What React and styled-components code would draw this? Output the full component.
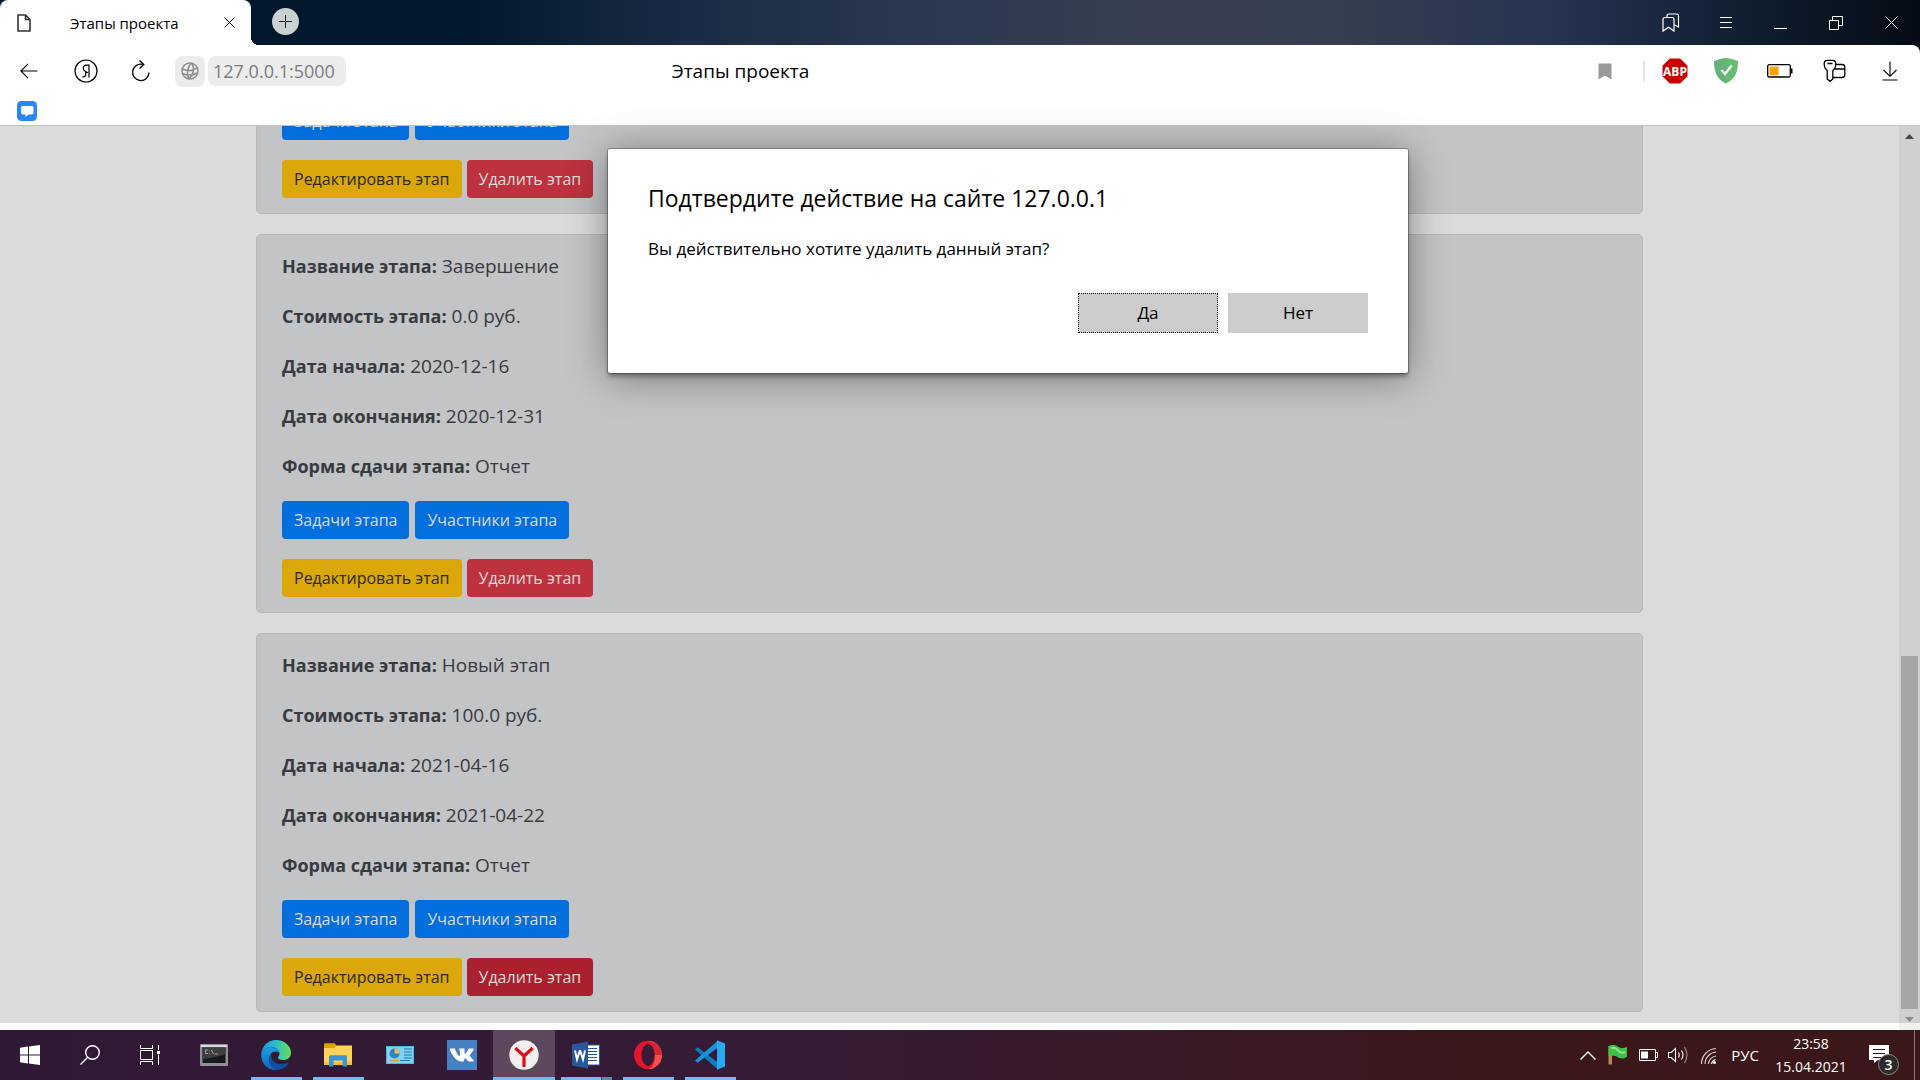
import React from "react";
import styled, { createGlobalStyle, css } from "styled-components";

const GlobalStyle = createGlobalStyle`
  *, *::before, *::after { box-sizing: border-box; }
  body { margin: 0; overflow: hidden; background: #fff; }
  button, input { font: inherit; }
  svg { display: block; flex: none; }
`;

const uiFont = `"Open Sans", "Noto Sans", sans-serif`;

const Screen = styled.div`
  height: 100vh;
  display: flex;
  flex-direction: column;
  font-family: ${uiFont};
  color: #000;
`;

/* ---------- browser chrome ---------- */

const TabStrip = styled.header`
  display: flex;
  height: 45px;
  flex: none;
  background: linear-gradient(90deg, #02172b 0%, #02182d 24%, #1a2c45 36%, #2b3850 48%, #383f51 60%, #353e50 70%, #2c3750 77%, #263352 81%, #132236 89%, #0b1624 95%, #050c15 100%);
`;

const Tab = styled.div`
  position: relative;
  display: flex;
  align-items: center;
  width: 251px;
  padding: 0 12px 0 16px;
  border-radius: 8px 8px 0 0;
  background: #fff;
  font-size: 15px;
  &::after {
    content: "";
    position: absolute;
    bottom: 0;
    left: 100%;
    width: 8px;
    height: 8px;
    background: radial-gradient(circle at 100% 0, transparent 8px, #fff 8px);
  }
`;

const TabTitle = styled.span`
  flex: 1;
  padding-left: 38px;
  white-space: nowrap;
`;

const PlainButton = styled.button`
  display: inline-flex;
  align-items: center;
  justify-content: center;
  width: ${(p) => p.$w || 36}px;
  height: ${(p) => p.$h || 36}px;
  padding: 0;
  border: 0;
  background: none;
  color: inherit;
  flex: none;
`;

const NewTabButton = styled(PlainButton)`
  width: 27px;
  height: 27px;
  margin: 8px 0 0 21px;
  border-radius: 50%;
  background: #cbd0d3;
  color: #1b2530;
`;

const WindowButtons = styled.div`
  display: flex;
  align-items: center;
  margin-left: auto;
  color: #fff;
`;

const ToolbarBack = styled.div`
  flex: none;
  background: #0a0f15;
`;

const Toolbar = styled.nav`
  display: grid;
  grid-template-columns: 1fr auto 1fr;
  align-items: center;
  height: 52px;
  padding-right: 3px;
  border-radius: 0 8px 0 0;
  background: #fff;
`;

const ToolbarSide = styled.div`
  display: flex;
  align-items: center;
  justify-content: ${(p) => (p.$end ? "flex-end" : "flex-start")};
`;

const SiteBadge = styled(PlainButton)`
  width: 30px;
  height: 31px;
  margin: 0 3px 0 6px;
  border-radius: 8px;
  background: #ececec;
  color: #8c8c8c;
`;

const Address = styled.input`
  width: 138px;
  height: 30px;
  padding: 0 5px;
  border: 0;
  border-radius: 8px;
  background: #ececec;
  color: #7c7c7c;
  font-size: 18px;
`;

const PageName = styled.h1`
  margin: 0 436px 0 0;
  font-size: 19px;
  font-weight: 400;
  white-space: nowrap;
`;

const Divider = styled.span`
  width: 2px;
  height: 20px;
  margin: 0 6px 0 30px;
  background: #e2e2e2;
`;

const BookmarkBar = styled.div`
  display: flex;
  flex: none;
  height: 28px;
  padding: 4px 9px;
`;

/* ---------- page ---------- */

const Viewport = styled.div`
  position: relative;
  display: flex;
  flex: 1;
  min-height: 0;
`;

const PageColumn = styled.div`
  display: flex;
  flex: 1;
  flex-direction: column;
  min-width: 0;
  padding-bottom: 7px;
`;

const Page = styled.main`
  display: flex;
  flex: 1;
  flex-direction: column;
  justify-content: flex-end;
  min-height: 0;
  overflow: hidden;
  border-top: 1px solid #c2c2c2;
  background: #dbdbdb;
`;

const Container = styled.div`
  display: flex;
  flex-direction: column;
  gap: 20px;
  width: 100%;
  max-width: 1425px;
  margin: 0 auto;
  padding: 0 19px 11px;
`;

const Card = styled.section`
  display: flex;
  flex-direction: column;
  gap: 20px;
  padding: 16px 25px 15px;
  border: 1px solid #b6b7ba;
  border-radius: 5px;
  background: #c3c4c6;
`;

const Field = styled.p`
  margin: 0;
  color: #373b3f;
  font-size: 19px;
  line-height: 30px;
`;

const FieldName = styled.b`
  font-size: 18px;
`;

const Actions = styled.div`
  display: flex;
  gap: ${(p) => p.$gap}px;
`;

const tones = {
  primary: css`background: #036edd; color: #dbdbdb;`,
  warning: css`background: #dba70b; color: #2a2a22;`,
  danger: css`background: #be313f; color: #dbdbdb;`,
  dangerActive: css`background: #a9212e; color: #dbdbdb;`,
};

const ActionButton = styled.button`
  height: 38px;
  padding: 0 12px;
  border: 0;
  border-radius: 4px;
  font-size: 16px;
  line-height: 38px;
  white-space: nowrap;
  ${(p) => tones[p.$tone]}
`;

const ScrollTrack = styled.div`
  display: flex;
  flex-direction: column;
  align-items: center;
  width: 21px;
  border-top: 1px solid #c2c2c2;
  background: linear-gradient(#d0d0d0 calc(100% - 7px), #f0f0f0 calc(100% - 7px));
`;

const ScrollArrow = styled(PlainButton)`
  width: 21px;
  height: 21px;
  color: ${(p) => (p.$muted ? "#8b8b8b" : "#454545")};
`;

const ScrollRun = styled.div`
  display: flex;
  flex: 1;
  flex-direction: column;
  justify-content: flex-end;
`;

const ScrollThumb = styled.div`
  width: 17px;
  height: 41%;
  background: #a6a6a6;
`;

/* ---------- confirmation window ---------- */

const Dialog = styled.div`
  position: absolute;
  top: 24px;
  left: calc(50% + 48px);
  width: 800px;
  margin-left: -400px;
  padding: 32px 40px 40px;
  border-radius: 2px;
  background: #fff;
  box-shadow: 0 0 0 1px rgba(0, 0, 0, 0.25), 0 4px 4px rgba(0, 0, 0, 0.3), 0 4px 40px rgba(0, 0, 0, 0.4);
`;

const DialogTitle = styled.h2`
  margin: 0;
  font-size: 23px;
  font-weight: 400;
  line-height: 34px;
`;

const DialogText = styled.p`
  margin: 20px 0 30px;
  font-size: 17px;
  line-height: 28px;
`;

const DialogActions = styled.div`
  display: flex;
  justify-content: flex-end;
  gap: 10px;
`;

const DialogButton = styled.button`
  width: 140px;
  height: 40px;
  padding: 0 0 2px;
  border: 1px ${(p) => (p.$focused ? "dotted #000" : "solid #ccc")};
  background: #ccc;
  color: #000;
  font-size: 17px;
`;

/* ---------- taskbar ---------- */

const Taskbar = styled.footer`
  display: flex;
  align-items: stretch;
  flex: none;
  height: 50px;
  background: linear-gradient(90deg, #301935 0%, #351b36 40%, #3a1925 65%, #3c1719 80%, #3b1719 100%);
  color: #fff;
`;

const Apps = styled.div`
  display: flex;
  padding-left: 3px;
`;

const SystemKey = styled(PlainButton)`
  width: 60px;
  height: 50px;
`;

const AppKey = styled.button`
  position: relative;
  display: flex;
  align-items: center;
  justify-content: center;
  width: 62px;
  height: 50px;
  padding: 0;
  border: 0;
  background: ${(p) => (p.$active ? "#5d485d" : "none")};
  &::after {
    content: "";
    position: absolute;
    right: ${(p) => (p.$active ? 0 : 5)}px;
    bottom: 0;
    left: ${(p) => (p.$active ? 0 : 6)}px;
    height: 3px;
    background: ${(p) =>
      !p.$open ? "none" : p.$stacked ? "linear-gradient(90deg, #76b9ed 40px, #36546c 40px, #36546c 41px, #6189ab 41px)" : "#76b9ed"};
  }
`;

const Tray = styled.div`
  display: flex;
  align-items: center;
  margin-left: auto;
  font-size: 15px;
`;

const Language = styled(PlainButton)`
  width: 44px;
  height: 50px;
`;

const Clock = styled.time`
  display: flex;
  flex-direction: column;
  align-items: center;
  width: 88px;
  font-size: 14px;
  line-height: 23px;
`;

const Notifications = styled(PlainButton)`
  position: relative;
  width: 60px;
  height: 50px;
  padding-right: 12px;
  border-right: 1px solid #8d7677;
  margin-right: 5px;
`;

const Count = styled.span`
  position: absolute;
  right: 15px;
  bottom: 5px;
  width: 21px;
  height: 21px;
  border: 1px solid #8a8a8a;
  border-radius: 50%;
  background: #2c2a2b;
  font-size: 14px;
  font-weight: 600;
  line-height: 19px;
  text-align: center;
`;

/* ---------- icons ---------- */

const Line = ({ w = 24, h = w, sw = 1, children, ...rest }) => (
  <svg width={w} height={h} viewBox={`0 0 ${w} ${h}`} fill="none" stroke="currentColor" strokeWidth={sw} aria-hidden="true" {...rest}>
    {children}
  </svg>
);

const FileIcon = () => (
  <Line w={16} h={20} sw={1.6} color="#2c3440">
    <path d="M2 2h7.500l4.500 4.500V18H2zM9.500 2v4.500H14" />
  </Line>
);
const CloseIcon = ({ size = 12 }) => (
  <Line w={size} sw={1}><path d={`M.5 .5L${size - 0.5} ${size - 0.5}M${size - 0.5} .5L.5 ${size - 0.5}`} /></Line>
);
const PlusIcon = () => <Line w={13} sw={1}><path d="M6.500 0v13M0 6.500h13" /></Line>;
const CollectionsIcon = () => (
  <Line w={18} h={20} sw={1.2}>
    <path d="M1 18V6.500C1 5 2 4.500 3 4.500h7c1.300 0 2 .7 2 2V18l-5.500-3.800zM5 4.500V3c0-1.300.7-2 2-2h7.500c1.300 0 2 .7 2 2v11l-4-2" />
  </Line>
);
const MenuIcon = () => <Line w={12}><path d="M0 .5h12M0 5.500h12M0 10.500h12" /></Line>;
const MinimizeIcon = () => <Line w={13} h={14}><path d="M0 12.500h13" /></Line>;
const RestoreIcon = () => <Line w={14}><path d="M.5 4.500h9v9h-9zM3.500 4V.5h10v9H10" /></Line>;
const BackIcon = () => <Line w={18} h={16} sw={1.1}><path d="M17.500 8H1M8 .8L.9 8 8 15.200" /></Line>;
const YandexHomeIcon = () => (
  <Line w={24} sw={1.2}>
    <circle cx="12" cy="12" r="11" />
    <path d="M15 5.500v13M15 6.200h-2.500c-2 0-3.200 1.300-3.200 3.200 0 1.500.9 2.300 2.200 3.200L14 13.800M11.700 12.800v3c0 1.500-1 2.200-3.500 2.200" />
  </Line>
);
const ReloadIcon = () => (
  <Line w={20} h={22} sw={1.3}>
    <path d="M11.500 4.300A8.200 8.200 0 1 0 18 12.500M8.500.6l4.300 3.900-4.300 3.900" />
  </Line>
);
const GlobeIcon = () => (
  <Line w={20} sw={1.5}>
    <circle cx="10" cy="10" r="8" />
    <path d="M11.500 2c-4 3.500-5 10-3 16M11.500 2c3.500 4.500 2 12.500-3 16M2.300 8c5 2 11 2 14.700-1M2.500 12.500c5 2 10.500 2 14.500-.5" />
  </Line>
);
const SavedIcon = () => <Line w={14} h={17}><path d="M.5 1.200Q.5.500 1.200.5h11.600q.7 0 .7.700V16.500L7 12.500.5 16.500z" fill="#999" stroke="none" /></Line>;
const AdblockIcon = () => (
  <svg width="26" height="26" viewBox="0 0 26 26" aria-hidden="true">
    <path d="M7.800.5h10.400l7.300 7.300v10.400l-7.300 7.300H7.800L.5 18.200V7.800z" fill="#c90000" />
    <text x="13" y="17.500" textAnchor="middle" fontFamily="Open Sans" fontWeight="700" fontSize="12" fill="#fff">ABP</text>
  </svg>
);
const ShieldIcon = () => (
  <svg width="24" height="26" viewBox="0 0 24 26" aria-hidden="true">
    <path d="M12 0C8.500.2 4 1.500 0 3c0 10.500 2.500 18 12 22.500z" fill="#67b279" />
    <path d="M12 0c3.500.2 8 1.500 12 3 0 10.500-2.500 18-12 22.500z" fill="#68bc71" />
    <path d="M7.500 12l3.500 4 6.700-8.500" fill="none" stroke="#fff" strokeWidth="2.200" />
  </svg>
);
const PowerIcon = () => (
  <Line w={26} h={14} sw={1.3}>
    <rect x=".7" y=".7" width="22.600" height="12.300" rx="1.500" />
    <rect x="2.500" y="2.500" width="9" height="8.700" fill="#ffa200" stroke="none" />
    <path d="M23.500 4.500h2v5h-2z" fill="currentColor" stroke="none" />
  </Line>
);
const PasswordsIcon = () => (
  <Line w={24} h={24} sw={1.3}>
    <path d="M4.200 11.500C2 10 1.200 7.500 1.200 4.500 1.200 2.200 2.300 1.300 4 1.300h6c1.700 0 2.800.9 2.800 3.200 0 3-.8 5.500-3 7v8.500L7 22.300l-2.800-2.300zM4.500 4.500h5M13 5.500h6c1.800 0 2.800 1 2.800 2.800v7.400c0 1.800-1 2.800-2.800 2.800h-9M12 10h9.500" />
  </Line>
);
const DownloadIcon = () => <Line w={16} h={20} sw={1.1}><path d="M8 .5V15M1.500 9L8 15.300 14.500 9M.5 19h15" /></Line>;
const ChatIcon = () => (
  <svg width="20" height="20" viewBox="0 0 20 20" aria-hidden="true">
    <rect width="20" height="20" rx="4.500" fill="#2787f5" />
    <path d="M4 6.500C4 5.500 5 5 6 5h8.500c1 0 2 .5 2 1.500v5c0 1-.8 2-2 2h-3L8.500 16v-2.500H6c-1.200 0-2-1-2-2z" fill="#fff" />
  </svg>
);
const Triangle = ({ down }) => (
  <svg width="9" height="5" viewBox="0 0 9 5" aria-hidden="true"><path d={down ? "M0 0h9L4.500 5z" : "M0 5h9L4.500 0z"} fill="currentColor" /></svg>
);

const StartIcon = () => (
  <svg width="20" height="20" viewBox="0 0 20 20" fill="#fff" aria-hidden="true">
    <path d="M0 2.800L8 1.600v7.900H0zM9 1.500L20 0v9.500H9zM0 10.500h8v7.900L0 17.300zM9 10.500h11V20L9 18.500z" />
  </svg>
);
const SearchIcon = () => <Line w={20} sw={1.4}><circle cx="12.500" cy="7.500" r="6.800" /><path d="M7.700 12.300L.5 19.500" /></Line>;
const TaskViewIcon = () => (
  <Line w={20} h={20}>
    <path d="M.5 0v3.500h12V0M.5 5.500h12v9H.5zM.5 20v-3.500h12V20M18.500 0v5M18.500 9.500V20" />
    <path d="M17 6h3v3h-3z" fill="#fff" stroke="none" />
  </Line>
);
const ConsoleIcon = () => (
  <svg width="28" height="22" viewBox="0 0 28 22" aria-hidden="true">
    <rect width="28" height="22" rx="1" fill="#8f9192" /><rect x="1" y="1" width="26" height="2" fill="#d9dadb" />
    <rect x="2.500" y="3.500" width="23" height="15.500" fill="#18191a" />
    <path d="M2.500 3.500h23v7l-23 5z" fill="#3d3f40" />
    <path d="M8 6H5.500v3.500H8M9.500 6.500v.8M9.500 9v.8M11.500 6l2 4M14.500 10H18" stroke="#aaa" fill="none" strokeWidth=".9" />
  </svg>
);
const EdgeIcon = () => (
  <svg width="30" height="30" viewBox="0 0 30 30" aria-hidden="true">
    <defs>
      <linearGradient id="edgeTop" x1="0" x2="1"><stop offset="0" stopColor="#2195dc" /><stop offset=".5" stopColor="#2bc0cd" /><stop offset="1" stopColor="#66e04b" /></linearGradient>
      <linearGradient id="edgeLeft" x1="0" y1="0" x2="0" y2="1"><stop offset="0" stopColor="#1aa0e0" /><stop offset="1" stopColor="#0c67c8" /></linearGradient>
    </defs>
    <path d="M.3 14C1 5.500 7.500 0 15 0c9 0 15 6.500 15 12.500 0 5-3.500 7.500-7.500 7.500-4 0-6-1.500-5.500-2.800.5-1 1.500-1.700 1.500-3.700C18.500 9.500 14 7 9.500 7 5 7 1.500 10 .3 14z" fill="url(#edgeTop)" />
    <path d="M.2 15C.2 10 4.500 7 9.500 7c5 0 9 3 9 6.500-1-1.500-2.500-2-4-2-4 0-6.500 4-6.500 8 0 5 4 9.500 9 10.300C7 31.500.2 23.500.2 15z" fill="url(#edgeLeft)" />
    <path d="M10.500 14.500C8.500 16 8 18 8 20c0 5.500 4.500 10 10 9.700 4-.6 7.500-3 9.500-6.200.3-.7-.3-1-.8-.7-8 3.700-17.500-.3-16.200-8.300z" fill="#0f4f9e" />
  </svg>
);
const FolderIcon = () => (
  <svg width="28" height="24" viewBox="0 0 28 24" aria-hidden="true">
    <path d="M0 1.500C0 .7.500.3 1 .3h9.500L13 2.800V8H0z" fill="#e0a000" />
    <path d="M0 5h10l3-2.500h15V22H0z" fill="#ffd35a" /><path d="M0 19h28v3H0z" fill="#f5bf3c" />
    <path d="M5 23.500V14c0-1 .5-1.700 1.500-1.700h15c1 0 1.500.7 1.500 1.700v9.500h-4.500v-6h-9v6z" fill="#3c92d6" />
  </svg>
);
const PanelIcon = () => (
  <svg width="28" height="18" viewBox="0 0 28 18" aria-hidden="true">
    <rect width="28" height="18" fill="#4fb6e6" /><rect x="1" y="1" width="26" height="16" fill="#7fd4f5" />
    <circle cx="8.500" cy="7.500" r="5" fill="#2c84c4" /><path d="M8.500 7.500V2.500a5 5 0 0 1 5 5z" fill="#f3c04b" />
    <path d="M18 3h8M18 6h8M18 9h8M18 12h8" stroke="#1d79b5" /><path d="M4 14.500h9" stroke="#f59a1c" strokeWidth="1.500" /><path d="M14 14.500h10" stroke="#1d79b5" />
  </svg>
);
const VkIcon = () => (
  <svg width="30" height="30" viewBox="0 0 30 30" aria-hidden="true">
    <rect width="30" height="30" fill="#4680c2" />
    <path d="M14.800 21.500h1.400s.5-.1.700-.3c.2-.2.200-.6.200-.6s0-1.900.8-2.200c.9-.3 2 1.900 3.200 2.700.9.600 1.600.5 1.600.5h3s1.600-.1.800-1.400c-.1-.1-.5-1-2.400-2.800-2-1.900-1.800-1.600.7-4.800 1.500-2 2.100-3.200 1.900-3.700-.2-.5-1.300-.4-1.300-.4l-3.300.1s-.5 0-.7.300c-.2.300-1.500 3.500-3 4.900-.4.400-.8.300-.8-.8v-3.300c0-1-.3-1.300-1.300-1.300h-3.500c-.6 0-.9.400-.9.700 0 .6.900.8 1 2.500v3.600c0 .8-.1.900-.4.900-1 0-3.200-3.500-4.200-6.300-.3-.9-.5-1.200-1.400-1.200H3.800s-.8 0-.8.600c0 .8.500 3 3.800 7.500 2 2.900 5 4.800 8 4.800z" fill="#fff" />
  </svg>
);
const YandexIcon = () => (
  <svg width="30" height="30" viewBox="0 0 30 30" aria-hidden="true">
    <circle cx="15" cy="15" r="14.700" fill="#f0f0f0" />
    <path d="M6.300 8l8.700 8 8.700-8M15 15v12" stroke="#dc1014" strokeWidth="3.200" fill="none" />
  </svg>
);
const WordIcon = () => (
  <svg width="28" height="28" viewBox="0 0 28 28" aria-hidden="true">
    <rect x="15" y="4" width="12.500" height="20" fill="#fff" stroke="#2b579a" />
    <path d="M16 7.500h9M16 10.500h9M16 13.500h9M16 16.500h9M16 19.500h9" stroke="#2b579a" strokeWidth="1.200" />
    <path d="M0 3.500L16 .5v27l-16-3z" fill="#2b579a" />
    <path d="M3 9.500l2 9 2.700-8.500h.6l2.700 8.500 2-9" fill="none" stroke="#fff" strokeWidth="1.900" />
  </svg>
);
const OperaIcon = () => (
  <svg width="30" height="30" viewBox="0 0 30 30" aria-hidden="true">
    <ellipse cx="15" cy="15" rx="14" ry="14.300" fill="#e3152a" />
    <path d="M15 .7c8 0 14 6.400 14 14.300s-6 14.300-14 14.300c4-1 7-6 7-14.300S19 2 15 .7z" fill="#f9504f" />
    <path d="M15 .7c-2 0 3.500.3 8 3C28 7 29 12 29 15H22C22 7 19 2 15 .7z" fill="#b8101c" opacity=".6" />
    <ellipse cx="15" cy="15" rx="6.500" ry="11" fill="#381b36" />
  </svg>
);
const CodeIcon = () => (
  <svg width="30" height="30" viewBox="0 0 30 30" aria-hidden="true">
    <path d="M0 9.500L2.500 7.300 23 22.500V29.500z" fill="#0b7cc0" /><path d="M0 20.500l2.500 2.200L23 7.500V.5z" fill="#1b93d8" />
    <path d="M22 .2L30 3.500v23L22 29.800z" fill="#2aa8f2" />
  </svg>
);

const ChevronIcon = () => <Line w={16} h={9} sw={1.4}><path d="M.5 8.500L8 1l7.500 7.500" /></Line>;
const FlagIcon = () => (
  <svg width="20" height="20" viewBox="0 0 20 20" aria-hidden="true">
    <path d="M.5 1h3.500v18.500H.5z" fill="#b98550" />
    <path d="M.5 1C4-.5 8 0 10 1.800c3 1.700 5 1.700 9 .2v9.500c-3 2.500-6 2.700-9 .7-3-1.700-6-1.700-9.500-.7z" fill="#3fbf45" />
    <path d="M3 3c4-1 6 1 8 3.500 2 1.500 4 1.500 6 .5" stroke="#8be88b" strokeWidth="2" fill="none" />
  </svg>
);
const TrayBattery = () => (
  <Line w={19} h={12}><path d="M.5.5h16v11H.5zM17 3.500h1.500v5H17" /><path d="M2 2.500h7v7H2z" fill="#fff" stroke="none" /></Line>
);
const SpeakerIcon = () => (
  <Line w={20} h={18} sw={1.1}>
    <path d="M.5 6.500h2.700L7.500 2.500v13l-4.300-4H.5zM10.500 6.500q1.500 2.500 0 5M13.500 4.500q3 4.500 0 9" />
    <path d="M16.500 1q5 8 0 16" opacity=".5" />
  </Line>
);
const WifiIcon = () => (
  <Line w={17} h={17} sw={1.1}>
    <path d="M1.500 17C1.500 8.500 8 2 16 1.500M5 17C5 10.500 10 5.500 16 5M8.500 17c0-4 3.500-7.500 7.500-8" opacity=".8" />
    <path d="M11.500 17q.5-3.500 4-4.500" /><circle cx="14.500" cy="15.500" r="1.500" fill="#fff" stroke="none" />
  </Line>
);
const MessageIcon = () => (
  <svg width="20" height="20" viewBox="0 0 20 20" aria-hidden="true">
    <path d="M0 0h20v15H9l-4 3v-3H0z" fill="#fff" /><path d="M4 4.500h12M4 8.500h12M4 12.500h8" stroke="#3b1719" />
  </svg>
);

/* ---------- data ---------- */

const stages = [
  { name: "Завершение", cost: "0.0 руб.", start: "2020-12-16", end: "2020-12-31", form: "Отчет" },
  { name: "Новый этап", cost: "100.0 руб.", start: "2021-04-16", end: "2021-04-22", form: "Отчет", pressed: true },
];

const apps = [
  { label: "Командная строка", Icon: ConsoleIcon },
  { label: "Edge", Icon: EdgeIcon, open: true },
  { label: "Проводник", Icon: FolderIcon, open: true },
  { label: "Панель управления", Icon: PanelIcon },
  { label: "VK", Icon: VkIcon },
  { label: "Яндекс", Icon: YandexIcon, open: true, active: true },
  { label: "Word", Icon: WordIcon, open: true, stacked: true },
  { label: "Opera", Icon: OperaIcon, open: true },
  { label: "VS Code", Icon: CodeIcon, open: true },
];

const StageActions = ({ pressed }) => (
  <>
    <Actions $gap={6}>
      <ActionButton $tone="primary">Задачи этапа</ActionButton>
      <ActionButton $tone="primary">Участники этапа</ActionButton>
    </Actions>
    <Actions $gap={5}>
      <ActionButton $tone="warning">Редактировать этап</ActionButton>
      <ActionButton $tone={pressed ? "dangerActive" : "danger"}>Удалить этап</ActionButton>
    </Actions>
  </>
);

const StageCard = ({ stage }) => (
  <Card>
    <Field><FieldName>Название этапа:</FieldName> {stage.name}</Field>
    <Field><FieldName>Стоимость этапа:</FieldName> {stage.cost}</Field>
    <Field><FieldName>Дата начала:</FieldName> {stage.start}</Field>
    <Field><FieldName>Дата окончания:</FieldName> {stage.end}</Field>
    <Field><FieldName>Форма сдачи этапа:</FieldName> {stage.form}</Field>
    <StageActions pressed={stage.pressed} />
  </Card>
);

export default function App() {
  return (
    <Screen>
      <GlobalStyle />
      <TabStrip>
        <Tab>
          <FileIcon />
          <TabTitle>Этапы проекта</TabTitle>
          <PlainButton $w={20} aria-label="Закрыть вкладку"><CloseIcon size={11} /></PlainButton>
        </Tab>
        <NewTabButton aria-label="Новая вкладка"><PlusIcon /></NewTabButton>
        <WindowButtons>
          <PlainButton $w={55} aria-label="Коллекции"><CollectionsIcon /></PlainButton>
          <PlainButton $w={55} aria-label="Меню"><MenuIcon /></PlainButton>
          <PlainButton $w={55} aria-label="Свернуть"><MinimizeIcon /></PlainButton>
          <PlainButton $w={55} aria-label="Развернуть"><RestoreIcon /></PlainButton>
          <PlainButton $w={57} aria-label="Закрыть"><CloseIcon size={13} /></PlainButton>
        </WindowButtons>
      </TabStrip>
      <ToolbarBack>
        <Toolbar>
          <ToolbarSide>
            <PlainButton $w={58} aria-label="Назад"><BackIcon /></PlainButton>
            <PlainButton $w={55} aria-label="Яндекс"><YandexHomeIcon /></PlainButton>
            <PlainButton $w={56} aria-label="Обновить"><ReloadIcon /></PlainButton>
            <SiteBadge aria-label="О сайте"><GlobeIcon /></SiteBadge>
            <Address aria-label="Адрес" defaultValue="127.0.0.1:5000" />
          </ToolbarSide>
          <PageName>Этапы проекта</PageName>
          <ToolbarSide $end>
            <PlainButton $w={16} aria-label="В закладки"><SavedIcon /></PlainButton>
            <Divider />
            <PlainButton $w={48} aria-label="Adblock Plus"><AdblockIcon /></PlainButton>
            <PlainButton $w={54} aria-label="Защита"><ShieldIcon /></PlainButton>
            <PlainButton $w={54} aria-label="Энергосбережение"><PowerIcon /></PlainButton>
            <PlainButton $w={55} aria-label="Пароли"><PasswordsIcon /></PlainButton>
            <PlainButton $w={55} aria-label="Загрузки"><DownloadIcon /></PlainButton>
          </ToolbarSide>
        </Toolbar>
      </ToolbarBack>
      <BookmarkBar>
        <PlainButton $h={20} aria-label="Чат"><ChatIcon /></PlainButton>
      </BookmarkBar>
      <Viewport>
        <PageColumn>
          <Page>
            <Container>
              <Card><StageActions /></Card>
              {stages.map((stage) => <StageCard key={stage.name} stage={stage} />)}
            </Container>
          </Page>
        </PageColumn>
        <ScrollTrack>
          <ScrollArrow aria-label="Вверх"><Triangle /></ScrollArrow>
          <ScrollRun><ScrollThumb /></ScrollRun>
          <ScrollArrow $muted aria-label="Вниз"><Triangle down /></ScrollArrow>
        </ScrollTrack>
        <Dialog role="dialog" aria-labelledby="confirm-title">
          <DialogTitle id="confirm-title">Подтвердите действие на сайте 127.0.0.1</DialogTitle>
          <DialogText>Вы действительно хотите удалить данный этап?</DialogText>
          <DialogActions>
            <DialogButton $focused>Да</DialogButton>
            <DialogButton>Нет</DialogButton>
          </DialogActions>
        </Dialog>
      </Viewport>
      <Taskbar>
        <SystemKey aria-label="Пуск"><StartIcon /></SystemKey>
        <SystemKey aria-label="Поиск"><SearchIcon /></SystemKey>
        <SystemKey aria-label="Представление задач"><TaskViewIcon /></SystemKey>
        <Apps>
          {apps.map(({ label, Icon, open, active, stacked }) => (
            <AppKey key={label} aria-label={label} $open={open} $active={active} $stacked={stacked}><Icon /></AppKey>
          ))}
        </Apps>
        <Tray>
          <PlainButton $w={30} aria-label="Скрытые значки"><ChevronIcon /></PlainButton>
          <PlainButton $w={30} aria-label="Флаг"><FlagIcon /></PlainButton>
          <PlainButton $w={30} aria-label="Батарея"><TrayBattery /></PlainButton>
          <PlainButton $w={30} aria-label="Громкость"><SpeakerIcon /></PlainButton>
          <PlainButton $w={30} aria-label="Сеть"><WifiIcon /></PlainButton>
          <Language>РУС</Language>
          <Clock><span>23:58</span><span>15.04.2021</span></Clock>
          <Notifications aria-label="Уведомления"><MessageIcon /><Count>3</Count></Notifications>
        </Tray>
      </Taskbar>
    </Screen>
  );
}
